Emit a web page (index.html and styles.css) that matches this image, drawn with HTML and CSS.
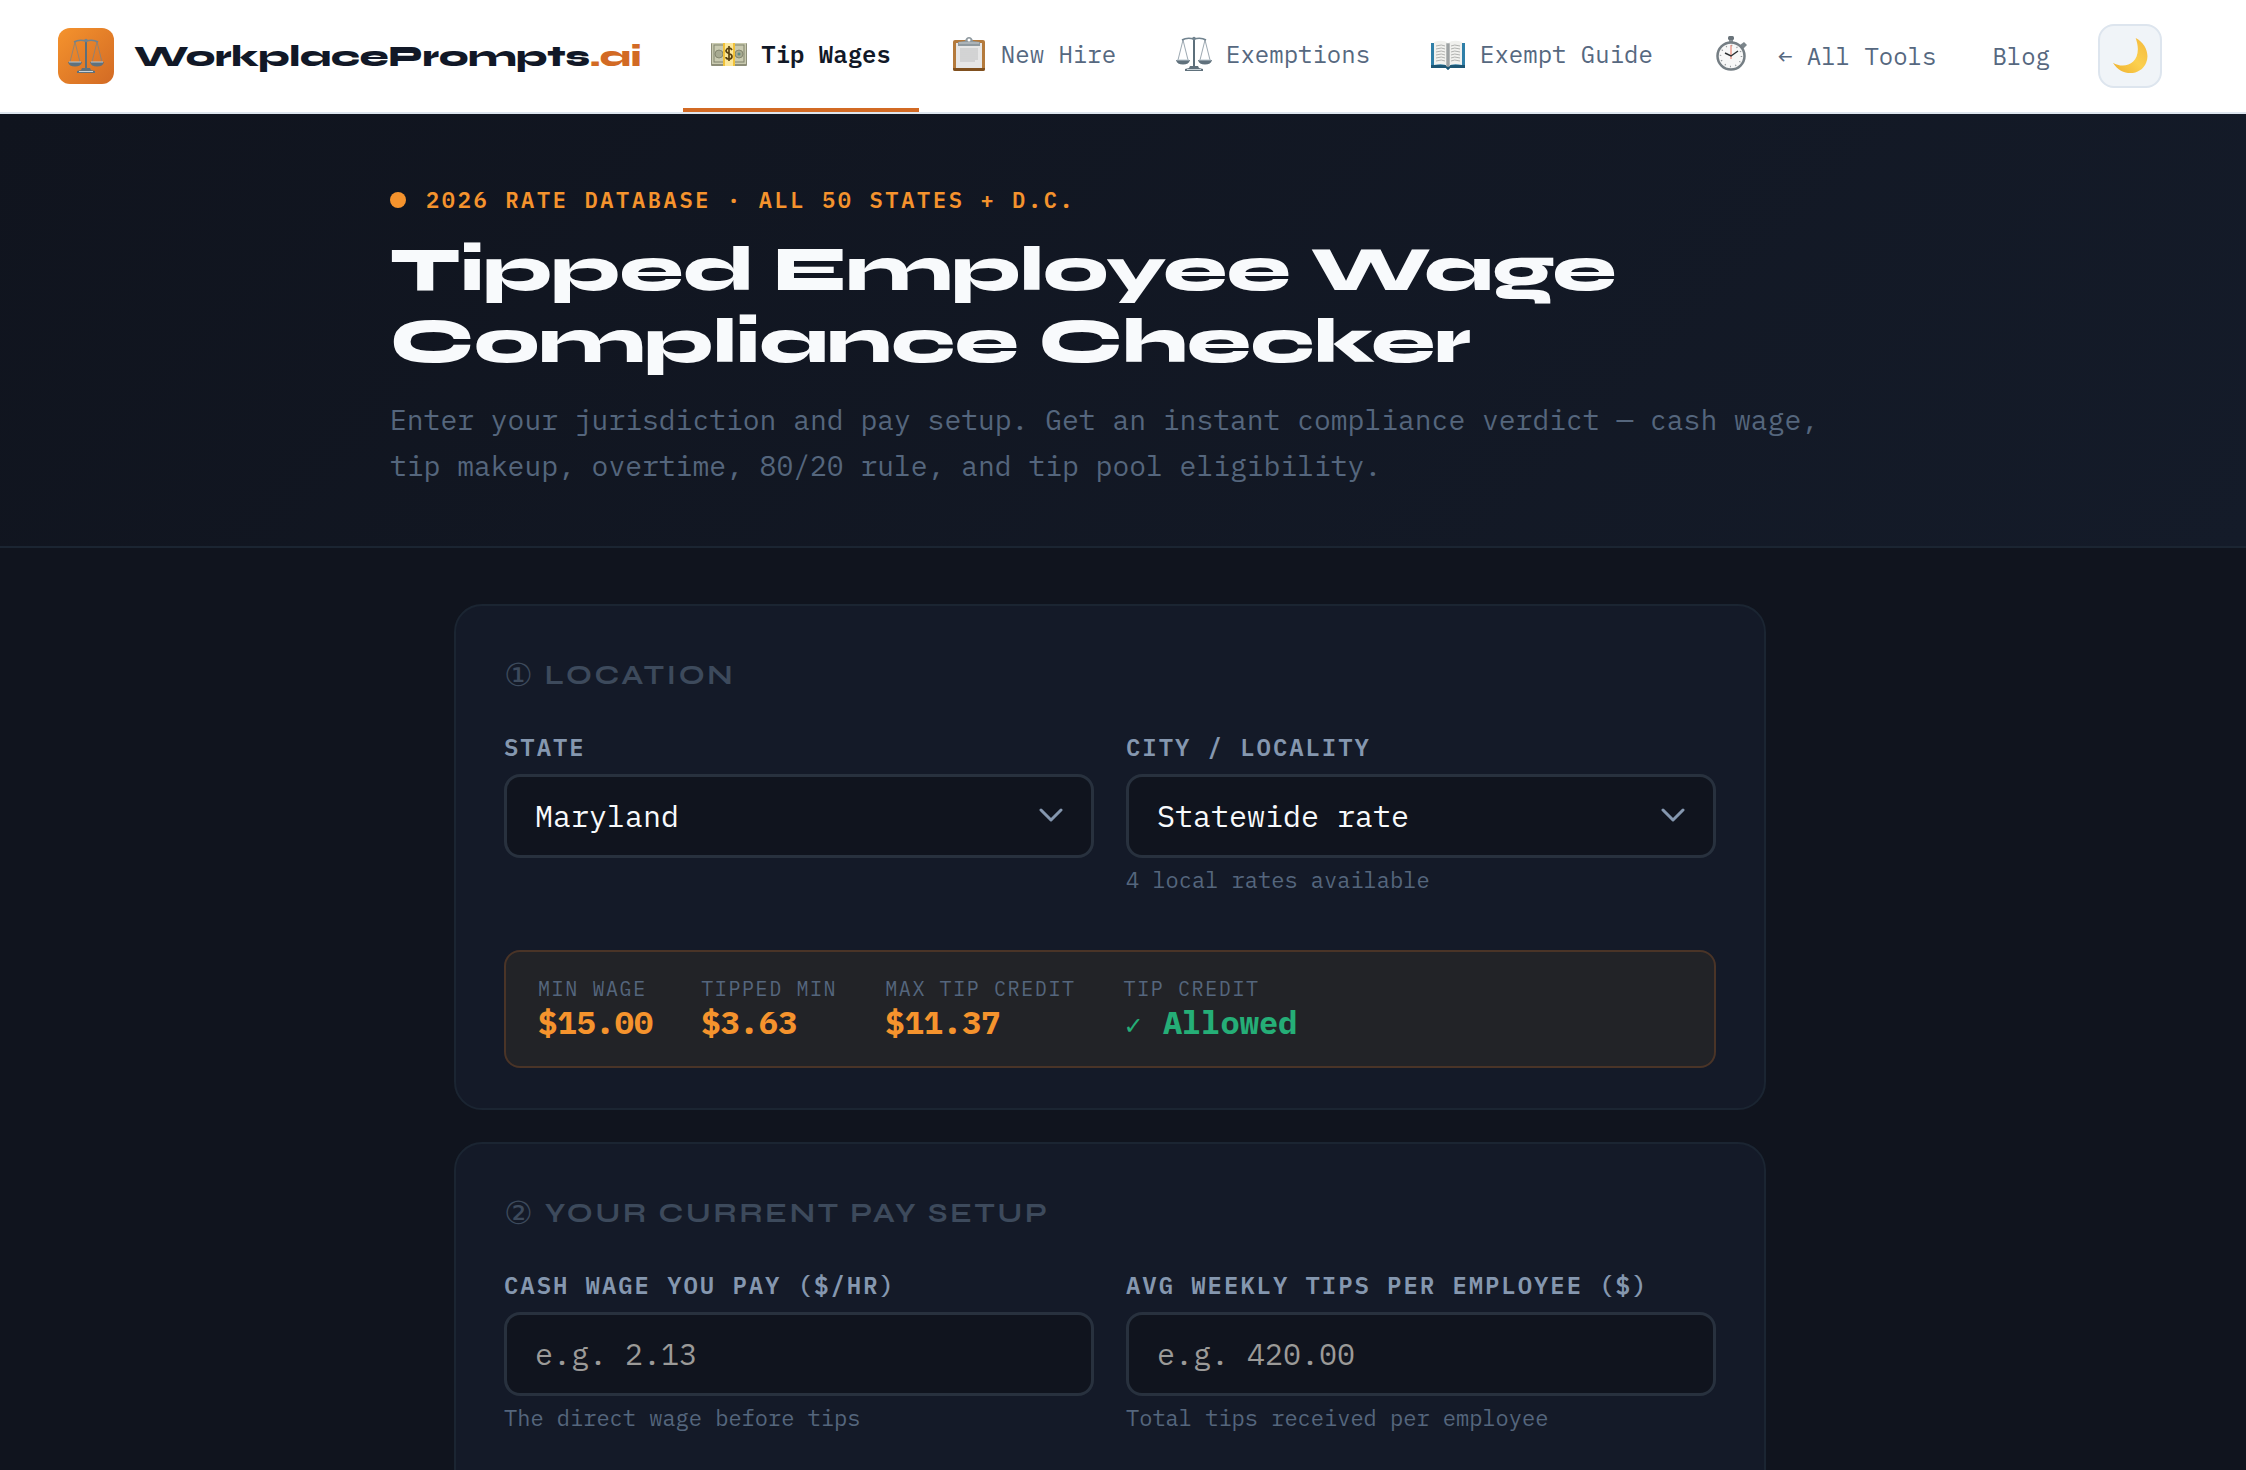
FILE: index.html
```html
<!DOCTYPE html>
<html lang="en">

<head>
    <meta charset="UTF-8">
    <meta name="viewport" content="width=device-width, initial-scale=1.0">
    <title>Tipped Employee Wage Compliance Checker | WorkplacePrompts.ai</title>
    <link rel="stylesheet" href="styles.css">
</head>

<body>
    <!-- shared scales icon, used in the logo and the nav -->
    <svg class="defs" width="0" height="0" aria-hidden="true">
        <symbol id="scales" viewBox="0 0 36 36">
            <g fill="none" stroke="#71838f" stroke-width="1">
                <path d="M7 4L2 24M7 4L12 24M29 4L24 24M29 4L34 24" stroke-width=".7" />
                <path d="M6 4Q11 1 18 3Q25 1 30 4" stroke-width="1.6" />
            </g>
            <path d="M17 2h2v28h-2z" fill="#5c6f7b" />
            <circle cx="18" cy="2.6" r="1.8" fill="#71838f" />
            <path d="M0 24h14q-1 4.500-7 4.500T0 24zM22 24h14q-1 4.500-7 4.500T22 24z" fill="#60717c" />
            <path d="M1 24h12M23 24h12" stroke="#b9c6ce" stroke-width="1" />
            <path d="M14 30h8l1 2 4 1v2H9v-2l4-1z" fill="#60717c" />
            <path d="M11 33.500h14" stroke="#c9d3d9" stroke-width="1" />
        </symbol>
    </svg>

    <header class="topbar">
        <a href="#" class="brand">
            <span class="brand-mark"><svg class="icon"><use href="#scales" /></svg></span>
            <span>WorkplacePrompts<span class="brand-tld">.ai</span></span>
        </a>

        <nav class="tabs">
            <a href="#" class="tab active">
                <svg class="icon" viewBox="0 0 36 36">
                    <rect x="0" y="7" width="36" height="23" rx="1" fill="#8d8e78" />
                    <rect x="1" y="7" width="34" height="21" fill="#c9cab0" />
                    <rect x="3" y="9" width="30" height="17" fill="none" stroke="#80836c" />
                    <circle cx="8" cy="18" r="4" fill="#a7aa91" stroke="#73765f" stroke-width=".7" />
                    <circle cx="28" cy="18" r="4" fill="#a7aa91" stroke="#73765f" stroke-width=".7" />
                    <circle cx="28" cy="18" r="1.500" fill="#5f8a7d" />
                    <path d="M12 7h12v23H12z" fill="#f2c238" />
                    <path d="M14 7h8v23h-8z" fill="#fbe79b" />
                    <path d="M21 14q-1-2-3-2t-3 2.500q0 2 3 3t3 3q0 2.500-3 2.500t-3-2M18 10v15" fill="none" stroke="#5a4210" stroke-width="1.700" />
                </svg>
                Tip Wages
            </a>
            <a href="#" class="tab">
                <svg class="icon" viewBox="0 0 36 36">
                    <rect x="2" y="4" width="32" height="31" rx="2" fill="#b47a3c" />
                    <path d="M2 32h32v1q0 2-2 2H4q-2 0-2-2z" fill="#80501f" />
                    <rect x="5" y="7" width="26" height="25" fill="#e6e6e6" />
                    <path d="M9 13h18M9 15h18M9 17h18M9 19h18M9 21h18M9 23h18M9 25h15" stroke="#bfc0c1" stroke-width="1" />
                    <path d="M7 6l7-1q1-4 4-4t4 4l7 1v4H7z" fill="#8f999f" />
                    <path d="M8 7h20" stroke="#c8ced2" />
                    <circle cx="18" cy="4" r="1.500" fill="#fff" />
                </svg>
                New Hire
            </a>
            <a href="#" class="tab">
                <svg class="icon"><use href="#scales" /></svg>
                Exemptions
            </a>
            <a href="#" class="tab">
                <svg class="icon" viewBox="0 0 36 36">
                    <path d="M1 7h34v25H20l-2 2-2-2H1z" fill="#2f7fa8" />
                    <path d="M1 29h34v3H20l-2 2-2-2H1z" fill="#1d5674" />
                    <path d="M4 6q9-3 14 1v23q-5-3-14-1zM32 6q-9-3-14 1v23q5-3 14-1z" fill="#f1f1ee" />
                    <path d="M6 10q6-2 9 0M6 13q6-2 9 0M6 16q6-2 9 0M6 19q6-2 9 0M6 22q6-2 9 0M6 25q6-2 9 0M21 10q3-2 9 0M21 13q3-2 9 0M21 16q3-2 9 0M21 19q3-2 9 0M21 22q3-2 9 0M21 25q3-2 9 0" fill="none" stroke="#a9aaa8" stroke-width=".9" />
                    <path d="M16 7l2 1 2-1v23l-2 1-2-1z" fill="#b5b8b8" />
                    <path d="M18 7v24" stroke="#777d80" stroke-width=".8" />
                </svg>
                Exempt Guide
            </a>
            <a href="#" class="tab" aria-label="Overtime">
                <svg class="icon" viewBox="0 0 36 36">
                    <path d="M16 3h4v6h-4z" fill="#8a9297" />
                    <rect x="15" y="0" width="6" height="4" rx="1.500" fill="#69737a" />
                    <path d="M27 9l4-3 3 3-4 4z" fill="#7c868c" />
                    <circle cx="18" cy="20" r="13.500" fill="#f7f7f7" stroke="#757e84" stroke-width="2.500" />
                    <circle cx="18" cy="20" r="10.500" fill="none" stroke="#8f9497" stroke-width="1.500" stroke-dasharray="1 4.500" />
                    <path d="M18 23V9" stroke="#e8705d" stroke-width="1" />
                    <path d="M12 17l6 3 7-5" fill="none" stroke="#2d3133" stroke-width="1.500" />
                </svg>
            </a>
        </nav>

        <div class="top-links">
            <a href="#">← All Tools</a>
            <a href="#">Blog</a>
        </div>
        <button type="button" class="theme-btn" aria-label="Toggle theme">
            <svg class="moon" viewBox="0 0 40 40">
                <defs>
                    <linearGradient id="moonFill" x1="0" y1="1" x2="1" y2="0">
                        <stop offset="0" stop-color="#efb02e" />
                        <stop offset=".5" stop-color="#fbd04f" />
                        <stop offset="1" stop-color="#f4b83c" />
                    </linearGradient>
                </defs>
                <path d="M26 1C36 6 41 18 37 27C32 40 12 43 2 27C15 35 35 27 26 1z" fill="url(#moonFill)" />
            </svg>
        </button>
    </header>

    <section class="hero">
        <div class="hero-inner">
            <p class="eyebrow">2026 Rate Database · All 50 States + D.C.</p>
            <h1>Tipped Employee Wage<br>Compliance Checker</h1>
            <p class="lead">Enter your jurisdiction and pay setup. Get an instant compliance verdict — cash wage, tip makeup, overtime, 80/20 rule, and tip pool eligibility.</p>
        </div>
    </section>

    <main class="content">
        <section class="card">
            <h2 class="card-title"><span class="step">①</span> Location</h2>
            <div class="field-row">
                <div class="field">
                    <label for="state">State</label>
                    <div class="select-wrap">
                        <select id="state">
                            <option>Maryland</option>
                        </select>
                        <svg class="chevron" viewBox="0 0 24 14"><path d="M2 2l10 10L22 2" /></svg>
                    </div>
                </div>
                <div class="field">
                    <label for="city">City / Locality</label>
                    <div class="select-wrap">
                        <select id="city">
                            <option>Statewide rate</option>
                        </select>
                        <svg class="chevron" viewBox="0 0 24 14"><path d="M2 2l10 10L22 2" /></svg>
                    </div>
                    <p class="hint">4 local rates available</p>
                </div>
            </div>

            <dl class="rates">
                <div>
                    <dt>Min Wage</dt>
                    <dd>$15.00</dd>
                </div>
                <div>
                    <dt>Tipped Min</dt>
                    <dd>$3.63</dd>
                </div>
                <div>
                    <dt>Max Tip Credit</dt>
                    <dd>$11.37</dd>
                </div>
                <div>
                    <dt>Tip Credit</dt>
                    <dd class="ok"><span class="tick">✓</span> Allowed</dd>
                </div>
            </dl>
        </section>

        <section class="card">
            <h2 class="card-title"><span class="step">②</span> Your Current Pay Setup</h2>
            <div class="field-row">
                <div class="field">
                    <label for="cash-wage">Cash Wage You Pay ($/hr)</label>
                    <input type="text" id="cash-wage" inputmode="decimal" placeholder="e.g. 2.13">
                    <p class="hint">The direct wage before tips</p>
                </div>
                <div class="field">
                    <label for="weekly-tips">Avg Weekly Tips Per Employee ($)</label>
                    <input type="text" id="weekly-tips" inputmode="decimal" placeholder="e.g. 420.00">
                    <p class="hint">Total tips received per employee</p>
                </div>
            </div>
        </section>
    </main>
</body>

</html>
```
FILE: styles.css
```css
:root {
    --mono: "IBM Plex Mono", "Liberation Mono", monospace;
    --display: "Syne", "DejaVu Sans", sans-serif;
    --bg: #10141e;
    --card: #141a28;
    --line: #1b2532;
    --muted: #55667d;
    --orange: #f5932d;
    --rust: #d26a24;
    --gutter: 26px;
}

* {
    box-sizing: border-box;
}

body {
    margin: 0;
    height: 100vh;
    overflow: hidden;
    background: var(--bg);
    color: #f8fafc;
    font-family: var(--mono);
    font-size: 28px;
}

h1, h2, p, dl, dd {
    margin: 0;
}

a {
    color: inherit;
    text-decoration: none;
}

.defs {
    position: absolute;
}

.icon {
    width: 36px;
    height: 36px;
    flex-shrink: 0;
}

/* top bar */
.topbar {
    display: flex;
    align-items: center;
    height: 114px;
    padding: 0 84px 0 58px;
    background: #fff;
    border-bottom: 2px solid #dde5ee;
    color: #56687f;
    font-size: 24px;
}

.brand {
    display: flex;
    align-items: center;
    gap: 20px;
    flex-shrink: 0;
    margin-right: 42px;
    font-family: var(--display);
    font-size: 29px;
    font-weight: 800;
    color: #111827;
}

.brand-mark {
    display: flex;
    align-items: center;
    justify-content: center;
    width: 56px;
    height: 56px;
    border-radius: 12px;
    background: linear-gradient(135deg, #f5932d, #d26a24);
}

.brand-tld {
    color: var(--rust);
}

.tabs {
    display: flex;
    align-self: stretch;
    flex: 1;
    gap: 4px;
    min-width: 0;
    overflow: hidden;
}

.tab {
    display: flex;
    align-items: center;
    gap: 14px;
    flex-shrink: 0;
    padding: 0 28px;
    border-bottom: 4px solid transparent;
    white-space: nowrap;
}

.tab.active {
    color: #111827;
    font-weight: 600;
    border-bottom-color: var(--rust);
}

.top-links {
    display: flex;
    flex-shrink: 0;
    white-space: nowrap;
}

.top-links a {
    padding: 0 28px;
}

.theme-btn {
    display: flex;
    align-items: center;
    justify-content: center;
    flex-shrink: 0;
    width: 64px;
    height: 64px;
    margin-left: 20px;
    padding: 0;
    border: 2px solid #dde5ee;
    border-radius: 16px;
    background: #f0f4f8;
    cursor: pointer;
}

.moon {
    width: 38px;
    height: 38px;
}

/* hero */
.hero {
    padding: 68px var(--gutter) 57px 0;
    background: linear-gradient(135deg, #10141e, #141b29);
    border-bottom: 2px solid var(--line);
}

.hero-inner {
    max-width: 1440px;
    margin: 0 auto;
}

.eyebrow {
    display: flex;
    align-items: center;
    gap: 20px;
    margin-bottom: 16px;
    font-size: 22px;
    font-weight: 600;
    line-height: 36px;
    letter-spacing: 0.12em;
    text-transform: uppercase;
    color: var(--orange);
}

.eyebrow::before {
    content: "";
    width: 16px;
    height: 16px;
    border-radius: 50%;
    background: var(--orange);
}

h1 {
    margin-bottom: 19px;
    font-family: var(--display);
    font-size: 64px;
    font-weight: 800;
    line-height: 72px;
}

.lead {
    line-height: 46px;
    color: var(--muted);
}

/* form cards */
.content {
    padding: 56px var(--gutter) 56px 0;
}

.card {
    max-width: 1312px;
    margin: 0 auto 32px;
    padding: 48px 48px 40px;
    background: var(--card);
    border: 2px solid var(--line);
    border-radius: 28px;
}

.card-title {
    display: flex;
    align-items: center;
    gap: 12px;
    margin-bottom: 33px;
    font-family: var(--display);
    font-size: 28px;
    font-weight: 700;
    line-height: 42px;
    letter-spacing: 0.1em;
    text-transform: uppercase;
    color: #3d4a5c;
}

.step {
    font-family: "DejaVu Sans", sans-serif;
    font-size: 32px;
    font-weight: 400;
    letter-spacing: 0;
}

.field-row {
    display: grid;
    grid-template-columns: 1fr 1fr;
    gap: 32px;
    margin-bottom: 54px;
}

.field label {
    display: block;
    margin-bottom: 9px;
    font-size: 24px;
    font-weight: 600;
    line-height: 36px;
    letter-spacing: 0.08em;
    text-transform: uppercase;
    color: #8597af;
}

.field input,
.field select {
    display: block;
    width: 100%;
    height: 84px;
    padding: 0 28px 2px;
    border: 3px solid #28313e;
    border-radius: 16px;
    background: var(--bg);
    color: #f8fafc;
    font-family: var(--mono);
    font-size: 30px;
    appearance: none;
}

.field input::placeholder {
    color: #9b9a98;
}

.select-wrap {
    position: relative;
}

.chevron {
    position: absolute;
    top: 34px;
    right: 31px;
    width: 24px;
    height: 14px;
    fill: none;
    stroke: #8597af;
    stroke-width: 3;
    stroke-linecap: round;
    stroke-linejoin: round;
    pointer-events: none;
}

.hint {
    margin-top: 6px;
    font-size: 22px;
    line-height: 32px;
    color: var(--muted);
}

.rates {
    display: flex;
    flex-wrap: wrap;
    gap: 24px 48px;
    padding: 23px 32px 25px;
    background: #222327;
    border: 2px solid #4a3427;
    border-radius: 16px;
}

.rates dt {
    font-size: 20px;
    line-height: 28px;
    letter-spacing: 0.08em;
    text-transform: uppercase;
    color: var(--muted);
}

.rates dd {
    font-size: 32px;
    font-weight: 700;
    line-height: 38px;
    color: var(--orange);
}

.rates .ok {
    color: #25ae77;
}

.tick {
    font-family: "DejaVu Sans", sans-serif;
    font-size: 24px;
    font-weight: 400;
    line-height: 1;
}
```
